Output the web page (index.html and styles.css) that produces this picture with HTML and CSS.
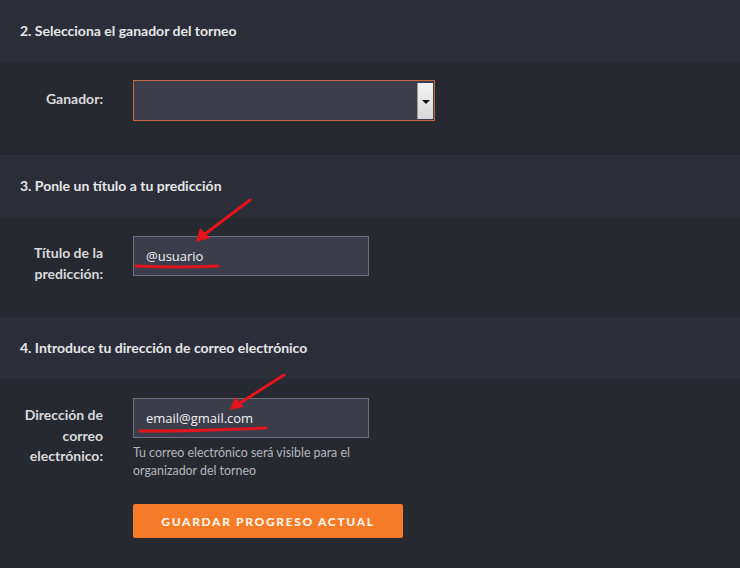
FILE: index.html
```html
<!DOCTYPE html>
<html lang="es">
<head>
<meta charset="utf-8">
<link rel="stylesheet" href="styles.css">
</head>
<body>
<div class="page">
  <section class="block">
    <div class="block-head">2. Selecciona el ganador del torneo</div>
    <div class="block-body b1">
      <div class="row">
        <div class="label label-1">Ganador:</div>
        <div class="control">
          <div class="select">
            <span class="select-fill"></span>
            <span class="select-btn"><span class="tri"></span></span>
          </div>
        </div>
      </div>
    </div>
  </section>
  <section class="block">
    <div class="block-head">3. Ponle un título a tu predicción</div>
    <div class="block-body b2">
      <div class="row">
        <div class="label">Título de la<br>predicción:</div>
        <div class="control">
          <div class="input">@usuario</div>
        </div>
      </div>
    </div>
  </section>
  <section class="block">
    <div class="block-head">4. Introduce tu dirección de correo electrónico</div>
    <div class="block-body b3">
      <div class="row">
        <div class="label">Dirección de<br>correo<br>electrónico:</div>
        <div class="control">
          <div class="input">email@gmail.com</div>
          <p class="help">Tu correo electrónico será visible para el<br>organizador del torneo</p>
          <button class="save">GUARDAR PROGRESO ACTUAL</button>
        </div>
      </div>
    </div>
  </section>
  <svg class="marks" width="740" height="568" viewBox="0 0 740 568">
    <g stroke="#e3141b" stroke-width="3" stroke-linecap="round" fill="none">
      <line x1="250" y1="200" x2="205" y2="234"/>
      <path d="M136 266 Q180 268 218 266"/>
      <line x1="284" y1="375" x2="240" y2="403"/>
      <path d="M140 431 Q200 431 266 428"/>
    </g>
    <g fill="#e3141b">
      <polygon points="196,242 200,228 210,238"/>
      <polygon points="230,410 235,397 244,407"/>
    </g>
  </svg>
</div>
</body>
</html>
```
FILE: styles.css
```css
html, body {
  margin: 0;
  padding: 0;
  background: #272930;
}
.page {
  position: relative;
  width: 740px;
  height: 568px;
  overflow: hidden;
  font-family: "Source Sans Pro", Lato, "Noto Sans", sans-serif;
  color: #e2e2e4;
}
.block-head {
  height: 62px;
  box-sizing: border-box;
  padding: 22px 0 0 20px;
  background: #2b2e39;
  font-size: 14px;
  font-weight: 700;
  line-height: 17px;
  color: #e6e6e8;
}
.block-body {
  background: #272930;
}
.b1 { padding: 18px 0 34px; }
.b2 { padding: 19px 0 0; height: 100px; box-sizing: border-box; }
.b3 { padding: 19px 0 0; height: 190px; box-sizing: border-box; }
.row {
  display: flex;
  align-items: flex-start;
  gap: 30px;
}
.label {
  width: 103px;
  flex: none;
  text-align: right;
  font-size: 14px;
  font-weight: 700;
  line-height: 20.5px;
  padding-top: 7px;
  color: #dadadc;
}
.label-1 { padding-top: 9px; }
.control {
  display: flex;
  flex-direction: column;
  align-items: flex-start;
}
.select {
  width: 302px;
  height: 41px;
  box-sizing: border-box;
  border: 1px solid #c6673f;
  background: #3c3f4b;
  display: flex;
  justify-content: flex-end;
  padding: 2px 1px 1px 0;
}
.select-btn {
  width: 15px;
  background: linear-gradient(#f4f4f4, #d8d8d8);
  display: flex;
  align-items: center;
  justify-content: center;
  border-left: 1px solid #9a9a9a;
}
.tri {
  width: 0;
  height: 0;
  border-left: 4px solid transparent;
  border-right: 4px solid transparent;
  border-top: 4px solid #111;
  margin-top: 2px;
}
.input {
  width: 236px;
  height: 40px;
  box-sizing: border-box;
  border: 1px solid #6e717c;
  background: #3b3e4a;
  padding: 0 12px;
  font-family: "Open Sans", "Noto Sans", sans-serif;
  font-size: 13px;
  line-height: 38px;
  color: #f2f2f4;
}
.help {
  margin: 6px 0 0;
  font-size: 12.4px;
  line-height: 18px;
  color: #b6b7bc;
}
.save {
  margin-top: 24px;
  width: 270px;
  height: 34px;
  border: 0;
  border-radius: 2px;
  background: #f57b28;
  color: #fff3e8;
  font-family: Lato, "Noto Sans", sans-serif;
  font-size: 12px;
  font-weight: 900;
  letter-spacing: 1.65px;
  padding: 0;
}
.marks {
  position: absolute;
  left: 0;
  top: 0;
  pointer-events: none;
}
```
